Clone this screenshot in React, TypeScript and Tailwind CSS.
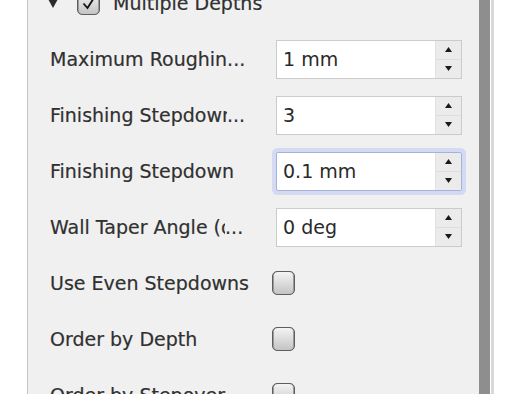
import React from "react";

const font = { fontFamily: '"DejaVu Sans", "Liberation Sans", sans-serif' };

const labelCls = "whitespace-nowrap text-[19px] text-[#303030] [-webkit-text-stroke:0.2px_#303030]";

function Label({ text, partial, partialW }: { text: string; partial?: string; partialW?: number }) {
  if (partial === undefined) {
    return <span className={labelCls}>{text}</span>;
  }
  return (
    <span className={"flex " + labelCls}>
      <span>{text}</span>
      {partial && (
        <span className="inline-block overflow-hidden" style={{ width: partialW }}>
          {partial}
        </span>
      )}
      <span>...</span>
    </span>
  );
}

function Spinner({ value, focused }: { value: string; focused?: boolean }) {
  return (
    <div
      className={
        "flex h-[39px] w-[186px] border bg-white " +
        (focused
          ? "rounded-[2px] border-[#a4b2dc] shadow-[0_0_0_4px_#d3daf2]"
          : "border-[#cbcbcb]")
      }
    >
      <div className="flex flex-1 items-center pl-[6px] text-[19px] text-[#2a2a2a]">{value}</div>
      <div className="flex w-[26px] flex-col border-l border-[#e2e2e2] bg-[#ebebeb]">
        <div className="flex flex-1 items-center justify-center border-b border-[#dedede]">
          <svg width="7" height="5" viewBox="0 0 7 5">
            <path d="M3.5 0 L7 5 L0 5 Z" fill="#1a1a1a" />
          </svg>
        </div>
        <div className="flex flex-1 items-center justify-center">
          <svg width="7" height="5" viewBox="0 0 7 5">
            <path d="M0 0 L7 0 L3.5 5 Z" fill="#1a1a1a" />
          </svg>
        </div>
      </div>
    </div>
  );
}

function Check({ checked }: { checked?: boolean }) {
  return (
    <div className="relative h-[24px] w-[23px] rounded-[5px] border border-[#5e5e5e] bg-gradient-to-b from-[#f4f4f4] to-[#c4c4c4] shadow-[inset_1px_0_0_#9a9a9a,inset_-1px_0_0_#9a9a9a]">
      {checked && (
        <svg className="absolute left-[3px] top-[3px]" width="16" height="16" viewBox="0 0 16 16">
          <path d="M2.5 8.5 L6.5 13 L13.5 2" fill="none" stroke="#111" strokeWidth="1.8" />
        </svg>
      )}
    </div>
  );
}

function Row({ children }: { children: React.ReactNode }) {
  return <div className="flex h-[56px] shrink-0 items-center">{children}</div>;
}

type R = {
  label: string;
  partial?: string;
  partialW?: number;
  kind: "spin" | "check";
  value?: string;
  focused?: boolean;
};

export default function App() {
  const rows: R[] = [
    { label: "Maximum Roughin", partial: "", kind: "spin", value: "1 mm" },
    { label: "Finishing Stepdow", partial: "n", partialW: 5, kind: "spin", value: "3" },
    { label: "Finishing Stepdown", kind: "spin", value: "0.1 mm", focused: true },
    { label: "Wall Taper Angle (", partial: "d", partialW: 4, kind: "spin", value: "0 deg" },
    { label: "Use Even Stepdowns", kind: "check" },
    { label: "Order by Depth", kind: "check" },
    { label: "Order by Stepover", kind: "check" },
  ];
  return (
    <div className="flex h-[394px] w-[526px] overflow-hidden bg-white" style={font}>
      <div className="w-[27px] shrink-0 bg-white" />
      <div className="flex w-[452px] shrink-0 flex-col overflow-hidden border-l border-[#c6c6c6] bg-[#f0f0f0]">
        <div className="mt-[-25px] flex flex-col">
          <Row>
            <div className="ml-[20px] flex items-center">
              <svg width="10" height="9" viewBox="0 0 10 9">
                <path d="M0 0 L10 0 L5 9 Z" fill="#2b2b2b" />
              </svg>
              <div className="ml-[19px]">
                <Check checked />
              </div>
              <span className={"ml-[13px] " + labelCls}>Multiple Depths</span>
            </div>
          </Row>
          {rows.map((r, i) => (
            <Row key={i}>
              <div className="ml-[22px] w-[225px] shrink-0 overflow-hidden">
                <Label text={r.label} partial={r.partial} partialW={r.partialW} />
              </div>
              {r.kind === "spin" ? (
                <div className="ml-[1px]">
                  <Spinner value={r.value!} focused={r.focused} />
                </div>
              ) : (
                <div className="ml-[-3px]">
                  <Check />
                </div>
              )}
            </Row>
          ))}
        </div>
      </div>
      <div className="w-[11px] shrink-0 bg-[#8e8e8e]" />
      <div className="w-[1px] shrink-0 bg-white" />
      <div className="w-[3px] shrink-0 bg-[#d9d9d9]" />
      <div className="flex-1 bg-white" />
    </div>
  );
}
